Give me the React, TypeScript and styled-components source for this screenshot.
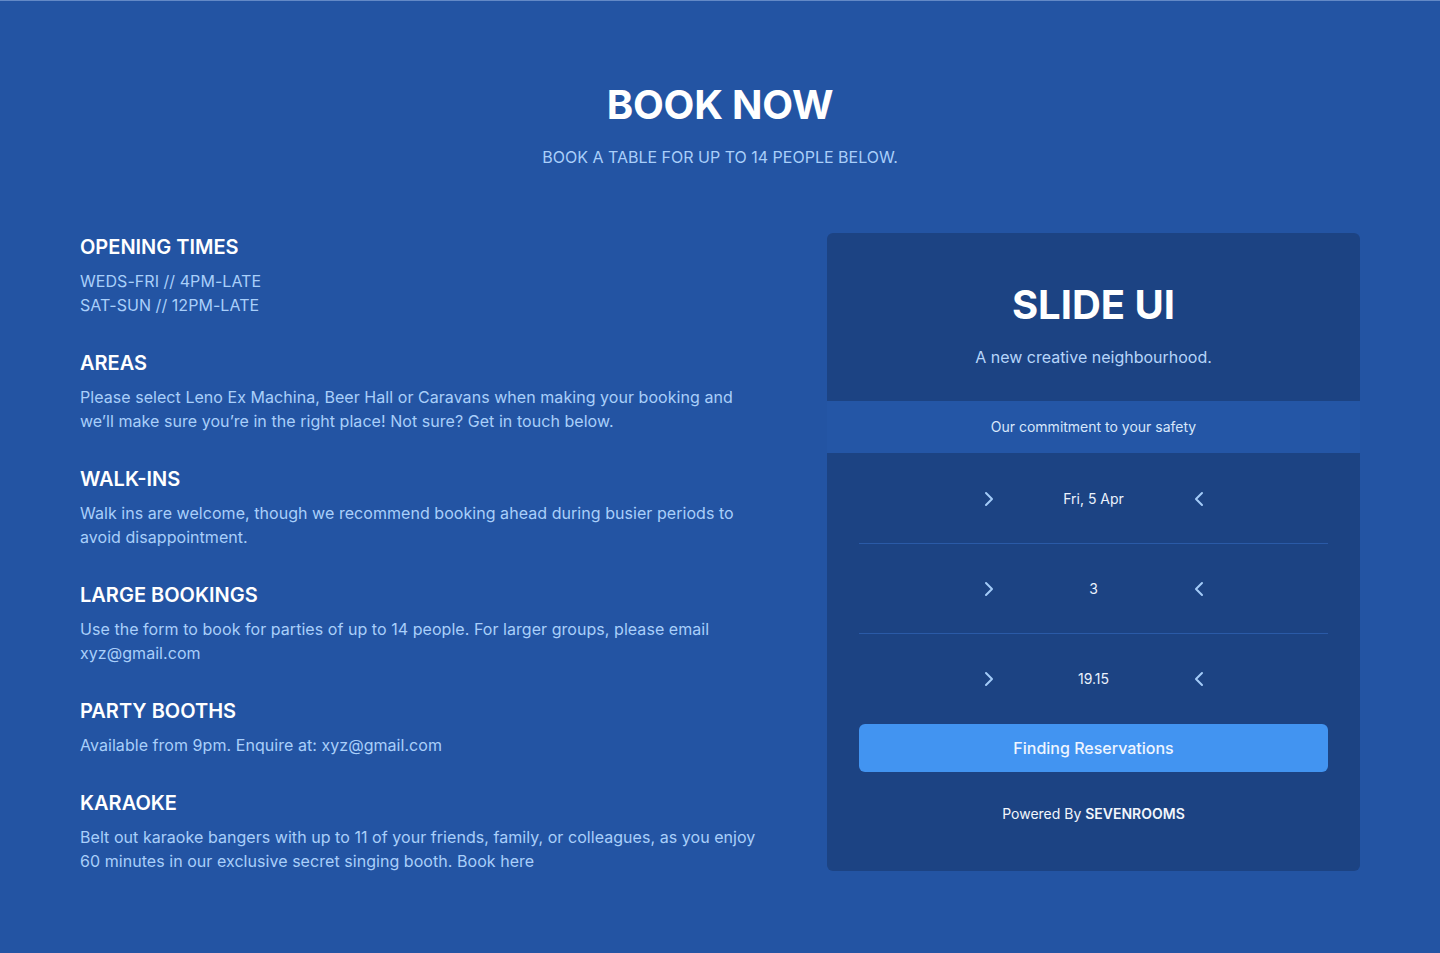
import React from "react";
import styled, { createGlobalStyle } from "styled-components";
import { ChevronRight, ChevronLeft } from "lucide-react";

const GlobalStyle = createGlobalStyle`
  * { box-sizing: border-box; }
  html, body { margin: 0; padding: 0; background: #2354a3; }
  body { font-family: Inter, "Noto Sans", sans-serif; -webkit-font-smoothing: antialiased; }
`;

const Page = styled.main`
  min-height: 953px;
  background: #2354a3;
  border-top: 1px solid #6389c6;
  border-bottom: 1px solid #6389c6;
  padding: 80px 80px 80px;
  display: flex;
  flex-direction: column;
  align-items: center;
`;

const Title = styled.h1`
  margin: 0;
  font-size: 40px;
  line-height: 48px;
  font-weight: 700;
  color: #ffffff;
  letter-spacing: -0.2px;
`;

const Subtitle = styled.p`
  margin: 16px 0 0;
  font-size: 16px;
  line-height: 24px;
  color: #a9cffa;
  text-transform: uppercase;
`;

const Content = styled.div`
  width: 100%;
  margin-top: 64px;
  display: flex;
  justify-content: space-between;
  align-items: flex-start;
`;

const InfoColumn = styled.div`
  width: 682px;
  display: flex;
  flex-direction: column;
  gap: 32px;
`;

const Section = styled.section`
  display: flex;
  flex-direction: column;
  gap: 8px;
`;

const Heading = styled.h2`
  margin: 0;
  font-size: 20px;
  line-height: 28px;
  font-weight: 600;
  color: #ffffff;
  text-transform: uppercase;
`;

const Body = styled.p`
  margin: 0;
  font-size: 16px;
  line-height: 24px;
  color: #a9cffa;
  letter-spacing: 0.05px;
`;

const Card = styled.div`
  width: 533px;
  border-radius: 6px;
  overflow: hidden;
  display: flex;
  flex-direction: column;
`;

const CardHeader = styled.div`
  background: #1c4383;
  padding: 48px 32px 32px;
  display: flex;
  flex-direction: column;
  align-items: center;
  gap: 16px;
`;

const Brand = styled.h3`
  margin: 0;
  font-size: 40px;
  line-height: 48px;
  font-weight: 700;
  color: #ffffff;
`;

const Tagline = styled.p`
  margin: 0;
  font-size: 16px;
  line-height: 24px;
  color: #b6d5fa;
`;

const Band = styled.div`
  background: #2456a6;
  padding: 16px;
  text-align: center;
  font-size: 14px;
  line-height: 20px;
  color: #d7e7fb;
`;

const CardBody = styled.div`
  background: #1c4383;
  padding: 1px 32px 47px;
  display: flex;
  flex-direction: column;
`;

const Row = styled.div<{ $divider?: boolean }>`
  height: 90px;
  display: flex;
  align-items: center;
  justify-content: center;
  border-bottom: ${(p) => (p.$divider ? "1px solid #2a5aa7" : "none")};
`;

const Picker = styled.div`
  width: 234px;
  display: flex;
  align-items: center;
  justify-content: space-between;
  color: #a3cbf8;
  svg { display: block; }
`;

const Value = styled.span`
  font-size: 14px;
  line-height: 20px;
  color: #eaf2fd;
`;

const Button = styled.button`
  height: 48px;
  border: none;
  border-radius: 6px;
  background: #4294f1;
  color: #eef5ff;
  font-family: inherit;
  font-size: 16px;
  font-weight: 500;
  cursor: pointer;
`;

const Powered = styled.p`
  margin: 32px 0 0;
  text-align: center;
  font-size: 14px;
  line-height: 20px;
  color: #f2f6fc;
  b { font-weight: 600; }
`;

const sections = [
  { h: "Opening Times", b: ["WEDS-FRI // 4PM-LATE", "SAT-SUN // 12PM-LATE"] },
  {
    h: "Areas",
    b: [
      "Please select Leno Ex Machina, Beer Hall or Caravans when making your booking and we’ll make sure you’re in the right place! Not sure? Get in touch below.",
    ],
  },
  {
    h: "Walk-ins",
    b: [
      "Walk ins are welcome, though we recommend booking ahead during busier periods to avoid disappointment.",
    ],
  },
  {
    h: "Large Bookings",
    b: [
      "Use the form to book for parties of up to 14 people. For larger groups, please email xyz@gmail.com",
    ],
  },
  { h: "Party Booths", b: ["Available from 9pm. Enquire at: xyz@gmail.com"] },
  {
    h: "Karaoke",
    b: [
      "Belt out karaoke bangers with up to 11 of your friends, family, or colleagues, as you enjoy 60 minutes in our exclusive secret singing booth. Book here",
    ],
  },
];

const rows = ["Fri, 5 Apr", "3", "19.15"];

export default function App() {
  return (
    <>
      <GlobalStyle />
      <Page>
        <Title>BOOK NOW</Title>
        <Subtitle>Book a table for up to 14 people below.</Subtitle>
        <Content>
          <InfoColumn>
            {sections.map((s) => (
              <Section key={s.h}>
                <Heading>{s.h}</Heading>
                <Body>
                  {s.b.map((line, i) => (
                    <React.Fragment key={i}>
                      {i > 0 && <br />}
                      {line}
                    </React.Fragment>
                  ))}
                </Body>
              </Section>
            ))}
          </InfoColumn>
          <Card>
            <CardHeader>
              <Brand>SLIDE UI</Brand>
              <Tagline>A new creative neighbourhood.</Tagline>
            </CardHeader>
            <Band>Our commitment to your safety</Band>
            <CardBody>
              {rows.map((r, i) => (
                <Row key={r} $divider={i < rows.length - 1}>
                  <Picker>
                    <ChevronRight size={24} strokeWidth={2} />
                    <Value>{r}</Value>
                    <ChevronLeft size={24} strokeWidth={2} />
                  </Picker>
                </Row>
              ))}
              <Button>Finding Reservations</Button>
              <Powered>
                Powered By <b>SEVENROOMS</b>
              </Powered>
            </CardBody>
          </Card>
        </Content>
      </Page>
    </>
  );
}
